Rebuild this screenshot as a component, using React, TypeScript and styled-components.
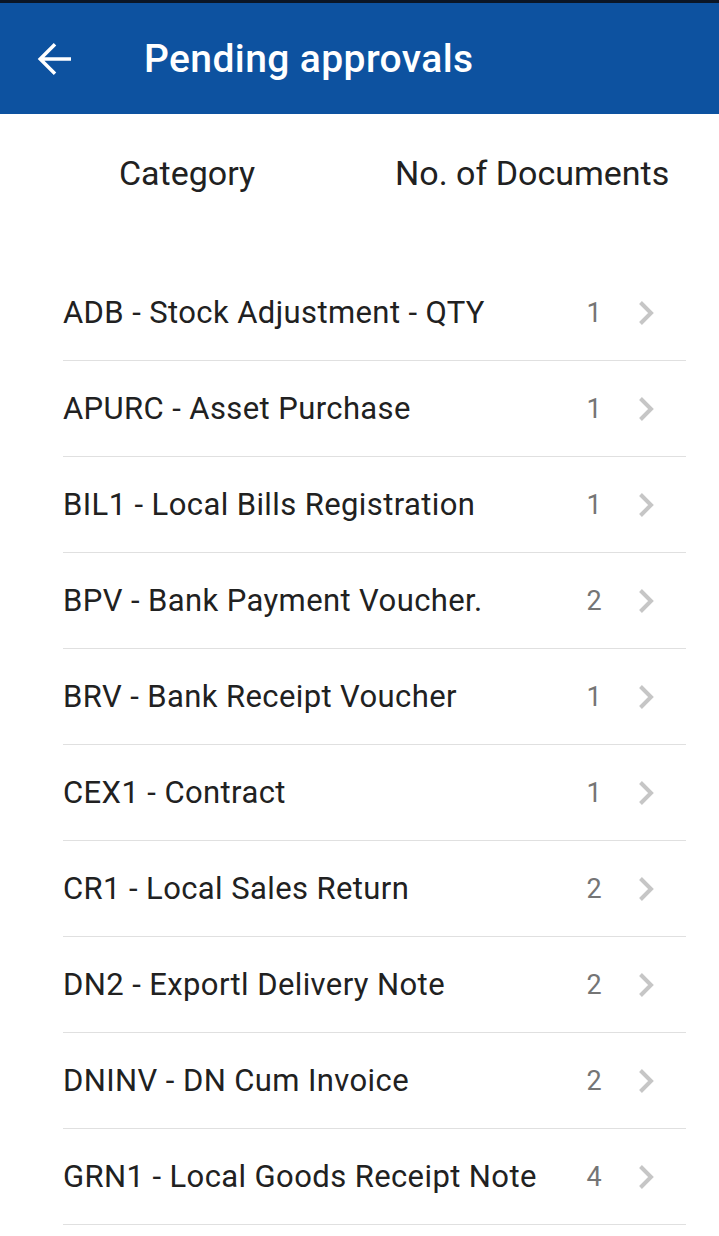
import React from "react";
import styled, { createGlobalStyle } from "styled-components";

const GlobalStyle = createGlobalStyle`
  html, body {
    margin: 0;
    padding: 0;
    background: #ffffff;
    font-family: Roboto, "Noto Sans", sans-serif;
  }
`;

const items = [
  { name: "ADB - Stock Adjustment - QTY", count: 1 },
  { name: "APURC - Asset Purchase", count: 1 },
  { name: "BIL1 - Local Bills Registration", count: 1 },
  { name: "BPV - Bank Payment Voucher.", count: 2 },
  { name: "BRV - Bank Receipt Voucher", count: 1 },
  { name: "CEX1 - Contract", count: 1 },
  { name: "CR1 - Local Sales Return", count: 2 },
  { name: "DN2 - Exportl Delivery Note", count: 2 },
  { name: "DNINV - DN Cum Invoice", count: 2 },
  { name: "GRN1 - Local Goods Receipt Note", count: 4 }
];

const Page = styled.div`
  width: 719px;
  min-height: 1236px;
  background: #ffffff;
`;

const StatusStrip = styled.div`
  height: 3px;
  background: #0b1626;
`;

const AppBar = styled.header`
  height: 111px;
  background: #0d52a0;
  display: flex;
  align-items: center;
  color: #ffffff;
`;

const BackButton = styled.button`
  width: 144px;
  height: 100%;
  border: none;
  background: transparent;
  display: flex;
  align-items: center;
  padding: 0 0 0 31px;
  color: #ffffff;
  cursor: pointer;
`;

const Title = styled.h1`
  margin: 0;
  font-size: 39px;
  font-weight: 500;
  letter-spacing: 0.4px;
`;

const ColumnHeads = styled.div`
  display: grid;
  grid-template-columns: 374px 1fr;
  height: 151px;
  box-sizing: border-box;
  padding-top: 38px;
  font-size: 34px;
  line-height: 42px;
  color: #212121;
`;

const ColumnHead = styled.div<{ $align: "center" | "left" }>`
  text-align: ${(p) => p.$align};
  padding-left: ${(p) => (p.$align === "left" ? "21px" : "0")};
`;

const List = styled.ul`
  list-style: none;
  margin: 0 33px 0 63px;
  padding: 0;
`;

const Row = styled.li`
  display: flex;
  align-items: center;
  height: 95px;
  border-bottom: 1px solid #e0e0e0;
`;

const Name = styled.span`
  flex: 1;
  font-size: 31px;
  color: #212121;
  letter-spacing: 0.4px;
`;

const Count = styled.span`
  width: 30px;
  text-align: center;
  font-size: 27px;
  color: #757575;
`;

const Chevron = styled.span`
  width: 24px;
  margin-left: 25px;
  margin-right: 28px;
  display: flex;
  justify-content: center;
  color: #c6c6c6;
`;

const App: React.FC = () => {
  return (
    <Page>
      <GlobalStyle />
      <StatusStrip />
      <AppBar>
        <BackButton aria-label="Back">
          <svg width="48" height="48" viewBox="0 0 24 24" fill="none">
            <path
              d="M20 12H5.2M12 4.6L4.6 12l7.4 7.4"
              stroke="#ffffff"
              strokeWidth="1.75"
            />
          </svg>
        </BackButton>
        <Title>Pending approvals</Title>
      </AppBar>
      <ColumnHeads>
        <ColumnHead $align="center">Category</ColumnHead>
        <ColumnHead $align="left">No. of Documents</ColumnHead>
      </ColumnHeads>
      <List>
        {items.map((item) => (
          <Row key={item.name}>
            <Name>{item.name}</Name>
            <Count>{item.count}</Count>
            <Chevron>
              <svg width="18" height="26" viewBox="0 0 18 26" fill="none">
                <path d="M3.5 2.5L14 13 3.5 23.5" stroke="currentColor" strokeWidth="4" />
              </svg>
            </Chevron>
          </Row>
        ))}
      </List>
    </Page>
  );
};

export default App;
